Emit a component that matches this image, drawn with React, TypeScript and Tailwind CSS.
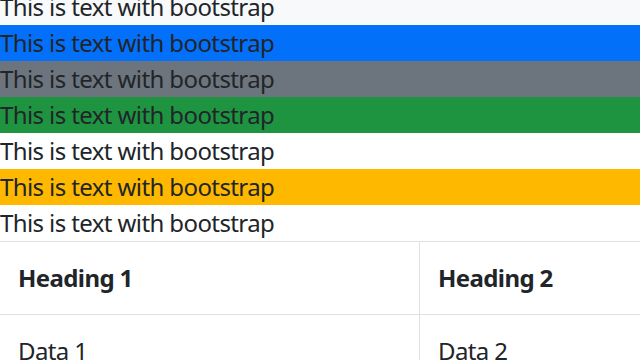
export default function App() {
  const rows = [
    "bg-[#f8f9fa]",
    "bg-[#0370fa]",
    "bg-[#6c757d]",
    "bg-[#1e9441]",
    "bg-white",
    "bg-[#ffb800]",
    "bg-white",
  ];
  return (
    <div className="h-[360px] w-[640px] overflow-hidden bg-white text-[#212529] font-['Noto_Sans',sans-serif]">
      <div className="-mt-[11px]">
        {rows.map((bg, i) => (
          <div key={i} className={`${bg} h-9 text-[24px] leading-[36px] tracking-[-0.6px]`}>
            This is text with bootstrap
          </div>
        ))}
        <div className="grid grid-cols-[420px_1fr] border-t border-[#dee2e6] text-[24px] leading-[36px]">
          <div className="border-r border-b border-[#dee2e6] p-[18px] font-bold tracking-[-0.6px]">Heading 1</div>
          <div className="border-b border-[#dee2e6] p-[18px] font-bold tracking-[-0.6px]">Heading 2</div>
          <div className="border-r border-[#dee2e6] p-[18px] tracking-[-0.6px]">Data 1</div>
          <div className="p-[18px] tracking-[-0.6px]">Data 2</div>
        </div>
      </div>
    </div>
  );
}
